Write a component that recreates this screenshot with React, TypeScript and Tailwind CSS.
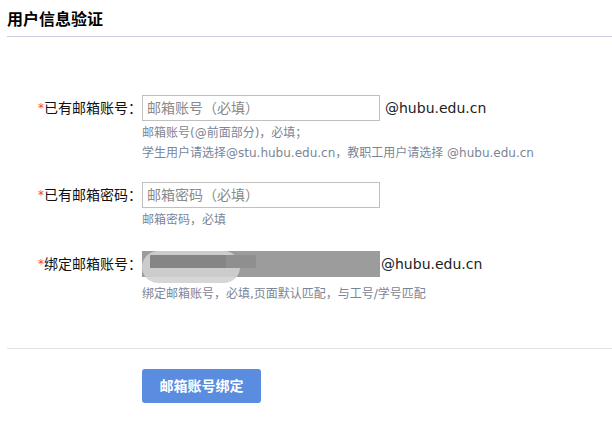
const FONT = "font-['DejaVu_Sans','Noto_Sans_CJK_SC',sans-serif]"

function Label({ text }: { text: string }) {
  return (
    <div className="w-[142px] shrink-0 text-right text-[14px] text-[#111] leading-[26px]">
      <span className="text-[#ff3b3b] text-[12px] align-top">*</span>
      {text}
    </div>
  )
}

function Hint({ children, className = 'mt-[2px]' }: { children: React.ReactNode; className?: string }) {
  return <div className={`text-[12px] leading-[20px] text-[#7b8599] ${className}`}>{children}</div>
}

export default function App() {
  return (
    <div className={`w-[612px] h-[421px] bg-white overflow-hidden ${FONT}`}>
      {/* header */}
      <div className="pl-[7px]">
        <h1 className="text-[16px] font-bold text-black leading-[20px] pt-[10px] pb-[6px]">用户信息验证</h1>
        <div className="h-px bg-[#c9cfde]" />
      </div>

      <div className="mt-[58px]">
        {/* row 1 */}
        <div className="flex">
          <Label text="已有邮箱账号：" />
          <div>
            <div className="flex items-center">
              <div className="w-[238px] h-[26px] border border-[#c0c0c0] px-[4px] text-[14px] leading-[24px] text-[#8a8a8a]">
                邮箱账号（必填）
              </div>
              <span className="ml-[5px] text-[14px] text-[#222]">@hubu.edu.cn</span>
            </div>
            <Hint>
              <div>邮箱账号(@前面部分)，必填；</div>
              <div>学生用户请选择@stu.hubu.edu.cn，教职工用户请选择 @hubu.edu.cn</div>
            </Hint>
          </div>
        </div>

        {/* row 2 */}
        <div className="flex mt-[19px]">
          <Label text="已有邮箱密码：" />
          <div>
            <div className="w-[238px] h-[26px] border border-[#c0c0c0] px-[4px] text-[14px] leading-[24px] text-[#8a8a8a]">
              邮箱密码（必填）
            </div>
            <Hint>邮箱密码，必填</Hint>
          </div>
        </div>

        {/* row 3 */}
        <div className="flex mt-[21px]">
          <Label text="绑定邮箱账号：" />
          <div>
            <div className="flex items-center">
              <div className="relative w-[238px] h-[26px] bg-[#9c9c9c]">
                {/* redaction blur */}
                <div className="absolute left-0 top-0 w-[98px] h-[32px] rounded-[16px] bg-[#d2d2d2] opacity-90" />
                <div className="absolute left-[8px] top-[4px] w-[76px] h-[13px] bg-[#858585]" />
                <div className="absolute left-[84px] top-[4px] w-[30px] h-[13px] bg-[#8f8f8f]" />
              </div>
              <span className="ml-[1px] text-[14px] text-[#222]">@hubu.edu.cn</span>
            </div>
            <Hint className="mt-[7px]">绑定邮箱账号，必填,页面默认匹配，与工号/学号匹配</Hint>
          </div>
        </div>
      </div>

      <div className="pl-[7px] mt-[44px]">
        <div className="h-px bg-[#e2e2e2]" />
      </div>

      <div className="pl-[142px] mt-[20px]">
        <button className="w-[119px] h-[34px] rounded-[3px] bg-[#5a8ddf] text-white text-[14px] font-bold">
          邮箱账号绑定
        </button>
      </div>
    </div>
  )
}
